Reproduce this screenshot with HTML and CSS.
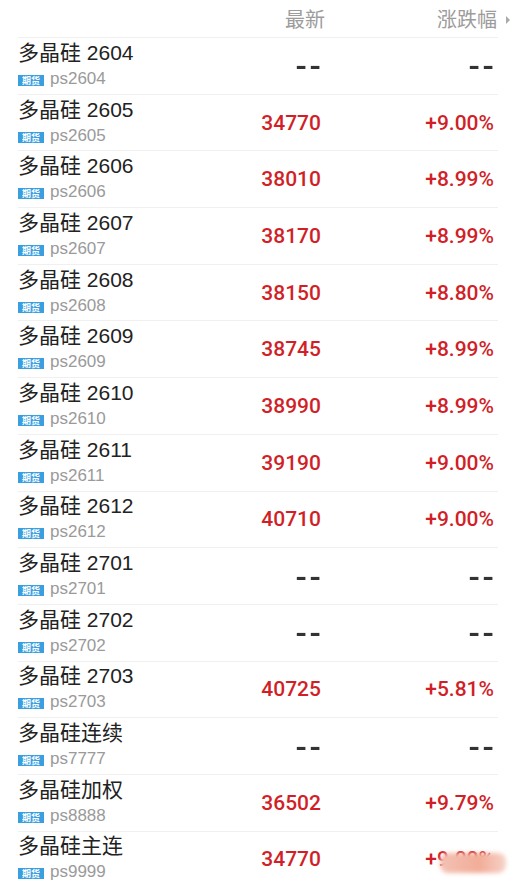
FILE: index.html
```html
<!DOCTYPE html>
<html>
<head>
  <meta charset="utf-8">
  <title>多晶硅</title>
  <link rel="stylesheet" href="styles.css">
</head>
<body>
  <div class="quote">
    <div class="head">
      <span class="head-name"></span>
      <span class="head-price">最新</span>
      <span class="head-rate">涨跌幅<i class="arrow"></i></span>
    </div>
    <div class="list" id="list"></div>
    <div class="mark"></div>
  </div>

  <script>
    var rows = [
      ["多晶硅 2604", "ps2604", "", ""],
      ["多晶硅 2605", "ps2605", "34770", "+9.00%"],
      ["多晶硅 2606", "ps2606", "38010", "+8.99%"],
      ["多晶硅 2607", "ps2607", "38170", "+8.99%"],
      ["多晶硅 2608", "ps2608", "38150", "+8.80%"],
      ["多晶硅 2609", "ps2609", "38745", "+8.99%"],
      ["多晶硅 2610", "ps2610", "38990", "+8.99%"],
      ["多晶硅 2611", "ps2611", "39190", "+9.00%"],
      ["多晶硅 2612", "ps2612", "40710", "+9.00%"],
      ["多晶硅 2701", "ps2701", "", ""],
      ["多晶硅 2702", "ps2702", "", ""],
      ["多晶硅 2703", "ps2703", "40725", "+5.81%"],
      ["多晶硅连续", "ps7777", "", ""],
      ["多晶硅加权", "ps8888", "36502", "+9.79%"],
      ["多晶硅主连", "ps9999", "34770", "+9.00%"]
    ];

    // 生成行情列表
    var str = "";
    for (let i = 0; i < rows.length; i++) {
      var r = rows[i];
      var price = r[2] == "" ? '<span class="none">--</span>' : r[2];
      var rate = r[3] == "" ? '<span class="none">--</span>' : r[3];
      str += '<div class="row">'
        + '<div class="name"><div class="title">' + r[0] + '</div>'
        + '<div class="code"><span class="tag">期货</span>' + r[1] + '</div></div>'
        + '<div class="price">' + price + '</div>'
        + '<div class="rate">' + rate + '</div>'
        + '</div>';
    }
    document.getElementById("list").innerHTML = str;
  </script>
</body>
</html>
```

FILE: styles.css
```css
body {
  margin: 0;
  padding: 0;
  background-color: #fff;
  font-family: "Liberation Sans", "Noto Sans CJK SC", sans-serif;
}

.quote {
  position: relative;
  height: 885px;
  overflow: hidden;
}

.head {
  display: flex;
  align-items: center;
  height: 37px;
  padding: 0 5px 0 18px;
  color: #9c9c9c;
  font-size: 20px;
  font-family: "Noto Sans CJK SC", sans-serif;
}

.head-name {
  flex: 1;
}

.head-price {
  width: 60px;
  text-align: right;
}

.head-rate {
  width: 185px;
  text-align: right;
}

.arrow {
  display: inline-block;
  width: 0;
  height: 0;
  margin-left: 9px;
  border-top: 4px solid transparent;
  border-bottom: 4px solid transparent;
  border-left: 4px solid #aaa;
  vertical-align: 3px;
}

.list {
  margin: 0 17px 0 18px;
  border-top: 1px solid #f0f0f0;
}

.row {
  display: grid;
  grid-template-columns: 1fr 100px 173px;
  align-items: center;
  box-sizing: border-box;
  height: 56.7px;
  padding-right: 4px;
  border-bottom: 1px solid #f0f0f0;
}

.name {
  margin-top: -2px;
}

.title {
  font-size: 21px;
  line-height: 24px;
  color: #222;
}

.code {
  margin-top: 4px;
  font-size: 17px;
  line-height: 20px;
  color: #9a9a9a;
}

.tag {
  display: inline-block;
  width: 26px;
  height: 11px;
  margin-right: 6px;
  background-color: #3a9fe0;
  color: #fff;
  font-size: 9px;
  font-weight: 700;
  line-height: 11px;
  text-align: center;
  vertical-align: 0px;
  font-family: "Noto Sans CJK SC", sans-serif;
}

.price,
.rate {
  text-align: right;
  font-family: Roboto, sans-serif;
  font-weight: 500;
  font-size: 21px;
  color: #d11f28;
}

.none {
  display: inline-block;
  color: #333;
  font-family: "Liberation Sans", sans-serif;
  font-weight: 700;
  font-size: 26px;
  letter-spacing: 2px;
  transform: scaleX(1.3);
  transform-origin: right center;
  margin-right: -2px;
}

.mark {
  position: absolute;
  left: 440px;
  top: 853px;
  width: 66px;
  height: 20px;
  border-radius: 8px;
  background: linear-gradient(90deg, #f3c2b4, #f2ad98 60%, #f6d3c9);
  filter: blur(2px);
}
```
